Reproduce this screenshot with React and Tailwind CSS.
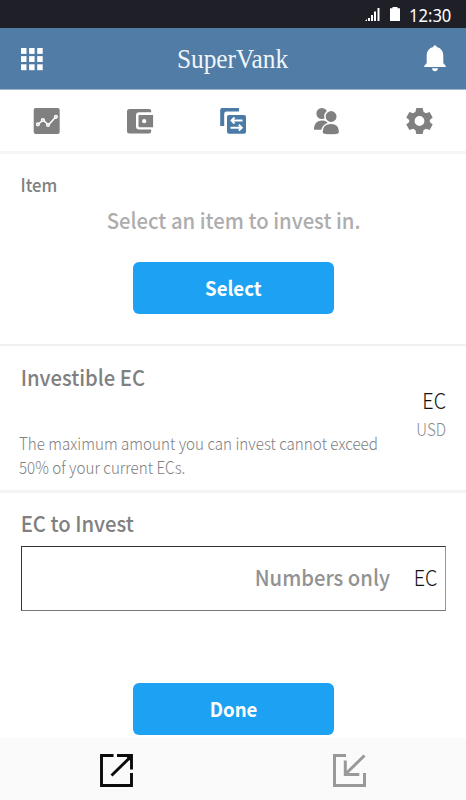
const sans = "font-['Noto_Sans_CJK_KR','Noto_Sans_CJK_JP',sans-serif]";

function GridIcon() {
  return (
    <svg width="22" height="23" viewBox="0 0 22 23" fill="#fff" className="mt-[2px]">
      {[0, 8.1, 16.3].map((y) =>
        [0, 8.1, 16.2].map((x) => <rect key={`${x}-${y}`} x={x} y={y} width="5.5" height="5.9" />)
      )}
    </svg>
  );
}

function BellIcon() {
  return (
    <svg width="22" height="28" viewBox="0 0 22 28" fill="#fff" className="mt-px">
      <path d="M11 .3c1 0 1.6.7 1.7 1.8 4.1.9 6.6 4.2 6.6 8.6v6.6c0 1.2.5 1.8 1.5 2.5.8.6 1 1 1 2.3H.2c0-1.3.2-1.7 1-2.3 1-.7 1.5-1.3 1.5-2.5v-6.6c0-4.4 2.5-7.7 6.6-8.6C9.400 1 10 .3 11 .3Z" />
      <path d="M8 23.300h6c-.2 1.800-1.300 2.900-3 2.900s-2.800-1.100-3-2.900Z" />
    </svg>
  );
}

function ChartIcon() {
  return (
    <svg width="28" height="28" viewBox="0 0 28 28">
      <rect x=".7" y="1" width="26" height="26" rx="2" fill="#808080" />
      <g fill="#808080" stroke="#fff" strokeWidth="1.600">
        <path d="m5.500 17 4.700-4 5.200 5 7.500-8.300" fill="none" />
        <circle cx="4.900" cy="17.300" r="1.300" />
        <circle cx="9.900" cy="13" r="1.300" />
        <circle cx="15" cy="18" r="1.300" />
        <circle cx="22.900" cy="9.800" r="1.300" />
      </g>
    </svg>
  );
}

function WalletIcon() {
  return (
    <svg width="28" height="28" viewBox="0 0 28 28">
      <path fill="#808080" d="M3.500 2h19.700a2 2 0 0 1 2 2v1.300H13.200a3.200 3.200 0 0 0-3.200 3.200v10.700a3.200 3.200 0 0 0 3.200 3.200h12v1.700a2.500 2.500 0 0 1-2.500 2.500H3.500A2.500 2.500 0 0 1 1 24.100V4.500A2.500 2.500 0 0 1 3.500 2Z" />
      <path fill="#808080" d="M13.500 8h13.600v12.200H13.500a1 1 0 0 1-1-1V9a1 1 0 0 1 1-1Z" />
      <circle cx="18.200" cy="14.200" r="2.100" fill="#fff" />
    </svg>
  );
}

function ExchangeIcon() {
  return (
    <svg width="28" height="28" viewBox="0 0 28 28">
      <path fill="#4a7aa6" d="M3 1h17v3.500H7.500a2.300 2.300 0 0 0-2.300 2.300v12.200H1.200V3A2 2 0 0 1 3 1Z" />
      <rect x="8" y="8" width="19" height="18.800" rx="2" fill="#4a7aa6" />
      <g fill="none" stroke="#fff" strokeWidth="1.900">
        <path d="M23.500 13.500H12.800M15.500 10.500l-3 3 3 3" />
        <path d="M11.500 20.700h11M19.800 17.700l3 3-3 3" />
      </g>
    </svg>
  );
}

function PeopleIcon() {
  return (
    <svg width="28" height="28" viewBox="0 0 28 28" fill="#808080">
      <circle cx="9.900" cy="6.500" r="5.500" />
      <path d="M1.900 22.800c0-5.600 2.700-9.400 8-9.400 4 0 6 1.500 7.500 4.200l-6 5.200Z" />
      <g stroke="#fff" strokeWidth="1.500">
        <circle cx="19.100" cy="9.500" r="6.200" />
        <path d="M9.900 25c0-5.800 4-8.700 9-8.700S27.700 19 27.700 25c0 1.300-.5 1.700-1.500 2.100-3.800 1.200-11 1.200-14.800 0C10.400 26.700 9.900 26.200 9.900 25Z" />
      </g>
    </svg>
  );
}

function GearIcon() {
  return (
    <svg width="28" height="28" viewBox="-.5 0 28 28">
      <path fill="#808080" fillRule="evenodd" d="M10.800 1h6.400l.9 4c.8.300 1.500.7 2.200 1.200l3.800-1.200 3.100 5.400-2.900 2.600v2l2.900 2.600-3.100 5.400-3.800-1.200c-.7.500-1.400.9-2.200 1.200l-.9 4h-6.400l-.9-4c-.8-.3-1.500-.7-2.200-1.200L3.900 23 .8 17.600 3.700 15v-2L.8 10.400 3.900 5l3.800 1.200c.7-.5 1.400-.9 2.200-1.200l.9-4ZM14 9.100a4.900 4.900 0 1 0 0 9.800 4.900 4.900 0 0 0 0-9.800Z" />
    </svg>
  );
}

function OutIcon() {
  return (
    <svg width="34" height="34" viewBox="0 0 34 34" fill="none" stroke="#0b0b0b" strokeWidth="2.900">
      <path d="M14.500 2.500H2.500v30h30V20M18 2.500h14.500v14M12.500 22.500 31.500 4" />
      <path d="M26 2.500h6.500V9Z" fill="#0b0b0b" stroke="none" />
    </svg>
  );
}

function InIcon() {
  return (
    <svg width="34" height="34" viewBox="0 0 34 34" fill="none" stroke="#999" strokeWidth="3">
      <path d="M14 2.500H2.500v30h30V20M13.300 7.500V21.500h14M13.300 21.300 32.500 2.500" />
    </svg>
  );
}

export default function App() {
  return (
    <div className={`${sans} flex h-[800px] w-[466px] flex-col overflow-hidden bg-white text-[#808080]`}>
      <div className="flex h-7 shrink-0 items-center justify-end bg-[#1e1f27] pr-[14px] text-white">
        <svg width="15" height="14" viewBox="0 0 15 14" fill="#fff" className="mr-[10px]">
          <path d="M0 14 2 12v2ZM3 11h2v3H3ZM6 8h2v6H6ZM9 4.500h2V14H9ZM12.500 1h2v13h-2Z" />
        </svg>
        <svg width="10" height="14" viewBox="0 0 10 14" fill="#fff" className="mr-[9px]">
          <path d="M2.500 0h5v1.200H10V14H0V1.200h2.500Z" />
        </svg>
        <span className="w-[43px] origin-left scale-x-[0.92] pt-[2px] font-['Noto_Sans',sans-serif] text-[18px] leading-7 whitespace-nowrap">12:30</span>
      </div>

      <header className="flex h-[62px] shrink-0 items-center justify-between border-b border-[#a2b8cf] bg-[#507ca5] pr-5 pl-[20.500px]">
        <GridIcon />
        <h1 className="scale-x-[0.905] pt-px pr-[2px] font-['Liberation_Serif',serif] text-[28px] leading-8 text-[#f1f6fa]">SuperVank</h1>
        <BellIcon />
      </header>

      <nav className="flex h-[61px] shrink-0 items-center justify-between px-[33px]">
        <ChartIcon />
        <WalletIcon />
        <ExchangeIcon />
        <PeopleIcon />
        <GearIcon />
      </nav>

      <section className="flex h-[195px] shrink-0 flex-col items-center border-t-[3px] border-b-[2px] border-t-[#f5f5f5] border-b-[#f0f0f0] pt-[18px]">
        <h2 className="w-full origin-left scale-x-[0.93] pl-[22px] text-[18px] leading-6 font-medium">Item</h2>
        <p className="mt-[7px] scale-x-[0.922] pl-px text-[22px] leading-8 font-medium whitespace-nowrap text-[#adadad]">Select an item to invest in.</p>
        <button className="mt-[27px] h-[52px] w-[201px] rounded-md bg-[#1da1f2] text-[20px] leading-[52px] font-bold text-white">
          <span className="inline-block scale-x-[0.93] pl-px">Select</span>
        </button>
      </section>

      <section className="flex h-[147px] shrink-0 flex-col border-b-[3px] border-[#f1f3f5] pt-[14px]">
        <h2 className="origin-left scale-x-[0.92] pl-[22.500px] text-[22px] leading-8 font-medium">Investible EC</h2>
        <div className="flex flex-1 justify-between pr-[20px] pl-[19px]">
          <p className="mt-[39px] w-[359px] origin-left scale-x-[0.893] text-[17px] leading-[23.500px] font-light whitespace-nowrap">
            The maximum amount you can invest cannot exceed
            <br />
            50% of your current ECs.
          </p>
          <div className="-mt-[9px] origin-right scale-x-[0.9] text-right font-light">
            <div className="text-[22px] leading-8 text-[#111]">EC</div>
            <div className="mt-[2px] text-[17px] leading-6 text-[#8a8a8a]">USD</div>
          </div>
        </div>
      </section>

      <section className="flex h-[245px] shrink-0 flex-col items-center pt-[13px]">
        <h2 className="w-full origin-left scale-x-[0.92] pl-[22.500px] text-[22px] leading-8 font-medium">EC to Invest</h2>
        <div className="mt-[8px] flex h-[65px] w-[425px] items-center justify-end border border-[#333] border-r-[#999] border-b-[#777] pr-[7px] pb-[4px] text-[22px]">
          <span className="origin-right scale-x-[0.92] font-medium text-[#929292]">Numbers only</span>
          <span className="ml-[21px] origin-right scale-x-[0.9] font-light text-[#111]">EC</span>
        </div>
        <button className="mt-[72px] h-[52px] w-[201px] rounded-md bg-[#1da1f2] text-[20px] leading-[50px] font-bold text-white">
          <span className="inline-block scale-x-[0.93] pl-[2px]">Done</span>
        </button>
      </section>

      <footer className="flex flex-1 items-center justify-between bg-[#fafafa] pt-[2px] pr-[100px] pl-[99px]">
        <OutIcon />
        <InIcon />
      </footer>
    </div>
  );
}
